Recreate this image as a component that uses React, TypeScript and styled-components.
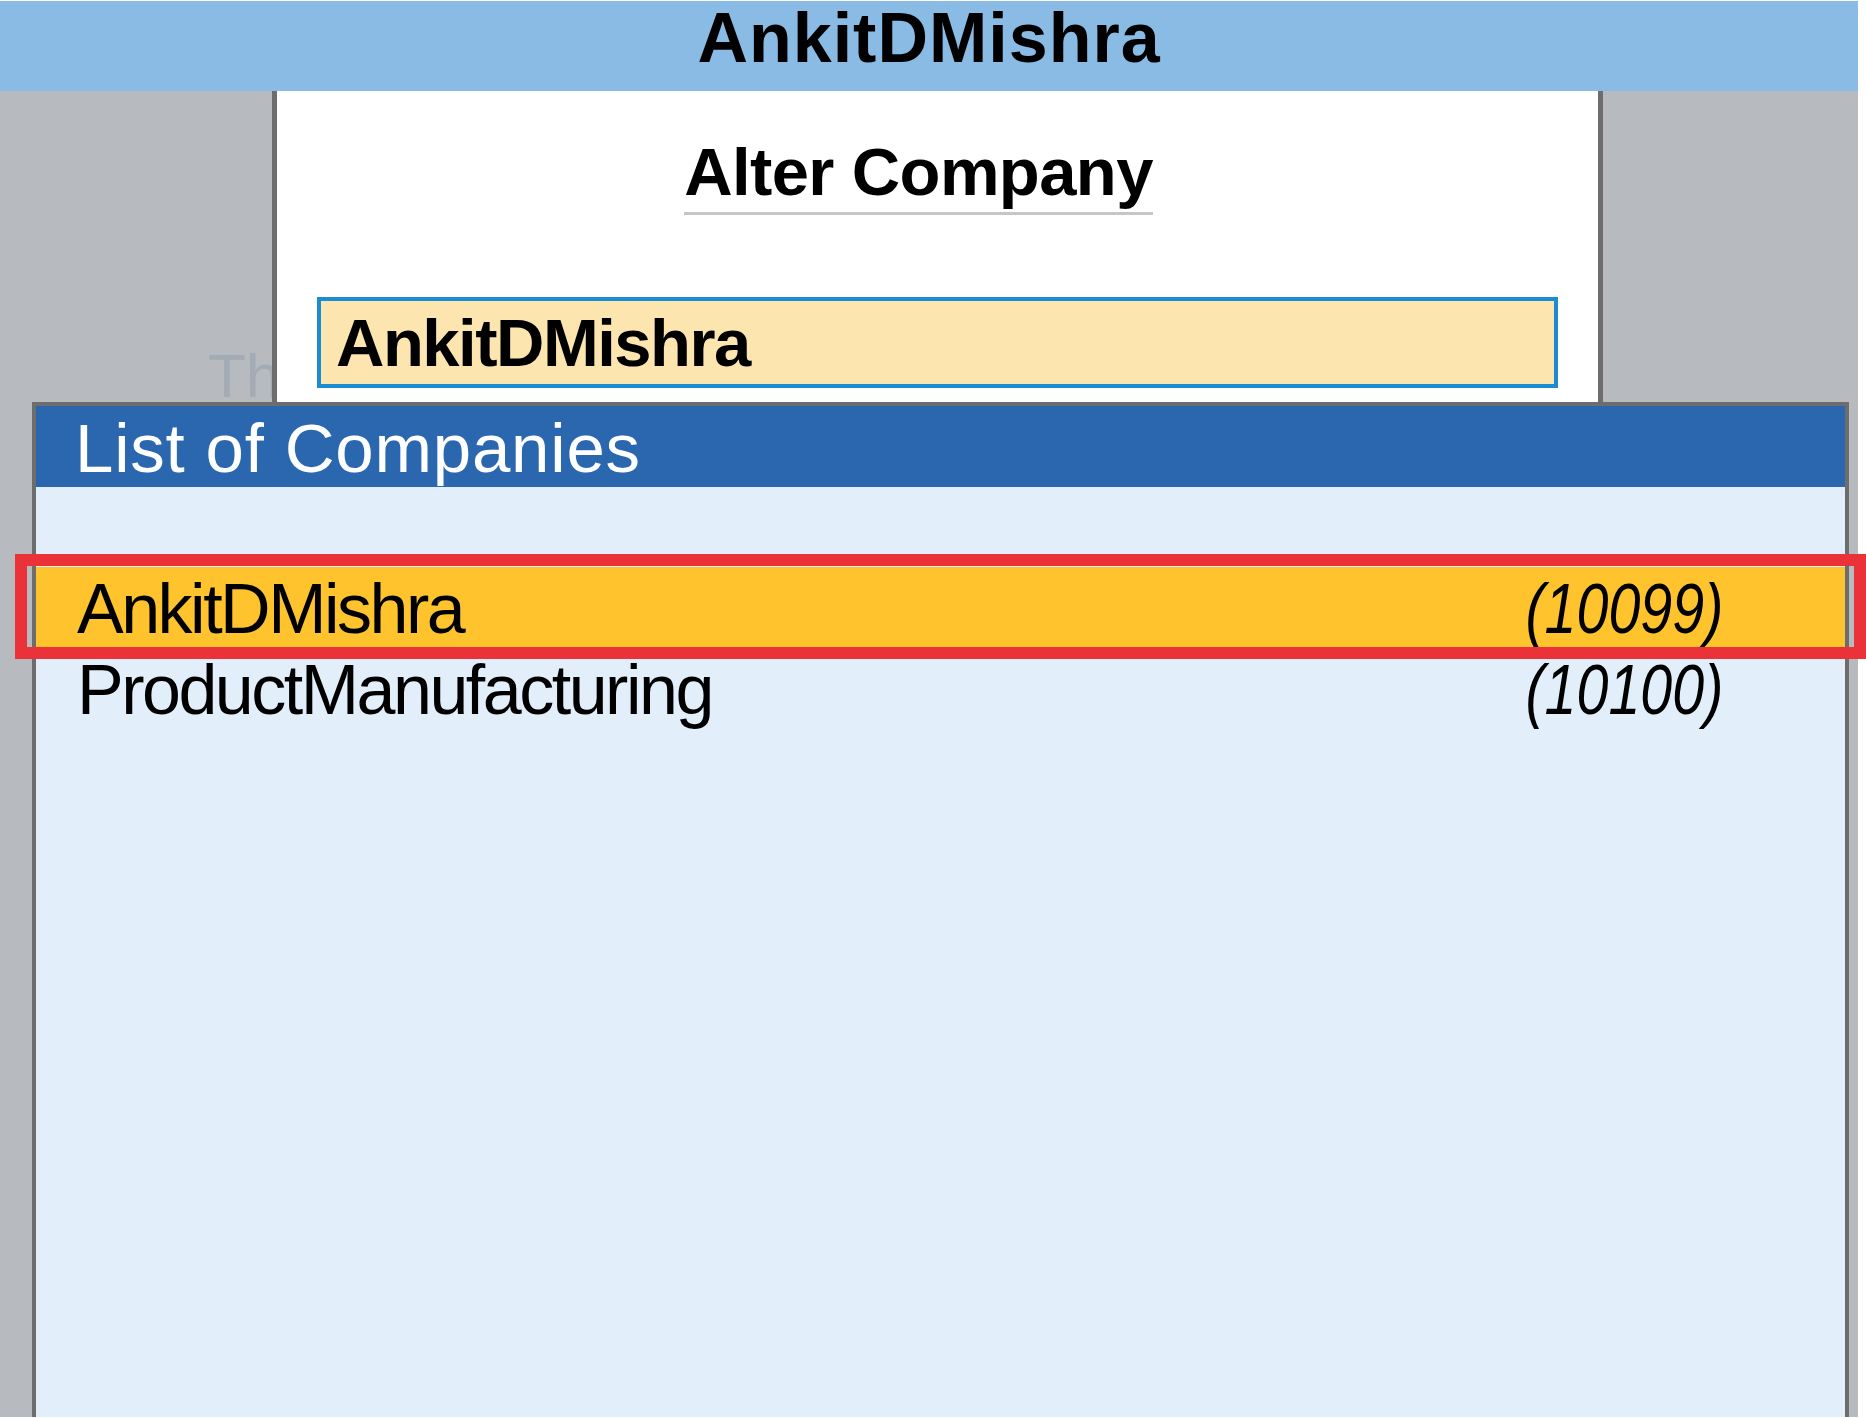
import React from "react";
import styled, { createGlobalStyle } from "styled-components";

const GlobalStyle = createGlobalStyle`
  html, body { margin: 0; padding: 0; background: #ffffff; }
  * { box-sizing: border-box; }
`;

const Root = styled.div`
  position: relative;
  width: 1866px;
  height: 1418px;
  padding: 1px 8px 1px 0;
  background: #ffffff;
  overflow: hidden;
  font-family: "Liberation Sans", Arial, sans-serif;
`;

const Screen = styled.div`
  position: relative;
  height: 100%;
  display: flex;
  flex-direction: column;
  background: #b7bbbf;
`;

const TopBar = styled.header`
  flex: none;
  height: 90px;
  padding-top: 2px;
  display: flex;
  justify-content: center;
  align-items: flex-start;
  background: #89bbe4;
  color: #000;
  font-weight: bold;
  font-size: 70px;
  line-height: 1;
  letter-spacing: 1px;
`;

const Workspace = styled.div`
  flex: 1;
  display: grid;
  grid-template-columns: 272px 1331px 1fr;
  min-height: 0;
`;

const Gutter = styled.div`
  overflow: hidden;
  padding-top: 254px;
`;

const GhostText = styled.div`
  padding-left: 208px;
  white-space: nowrap;
  font-size: 62px;
  line-height: 1;
  color: #a3abb5;
`;

const Panel = styled.section`
  display: flex;
  flex-direction: column;
  background: #ffffff;
  border-left: 5px solid #6d6d6d;
  border-right: 5px solid #6d6d6d;
  padding-top: 47px;
`;

const HeadingRow = styled.div`
  display: flex;
  justify-content: center;
  padding-right: 38px;
`;

const Heading = styled.h1`
  margin: 0;
  padding-bottom: 7px;
  border-bottom: 3px solid #c6c6c6;
  font-size: 67px;
  line-height: 1;
  font-weight: bold;
  letter-spacing: -0.6px;
  color: #000;
`;

const NameField = styled.div`
  margin: 82px 40px 0;
  height: 91px;
  padding: 8px 15px 0;
  border: 4px solid #1c8cd0;
  background: #fde5af;
  font-size: 67px;
  line-height: 1;
  font-weight: bold;
  letter-spacing: -1.5px;
  color: #000;
`;

const Popup = styled.div`
  position: absolute;
  left: 32px;
  top: 401px;
  right: 9px;
  bottom: 0;
  display: flex;
  flex-direction: column;
  border: 4px solid #6d6d6d;
  border-bottom: none;
  background: #e2effa;
`;

const PopupHeader = styled.div`
  flex: none;
  height: 81px;
  padding: 8px 0 0 39px;
  background: #2a67af;
  color: #ffffff;
  font-size: 69px;
  line-height: 1;
  letter-spacing: 0.8px;
`;

const List = styled.div`
  padding-top: 80px;
  display: flex;
  flex-direction: column;
`;

const Row = styled.div<{ $selected?: boolean }>`
  height: 81px;
  padding: 7px 122px 0 41px;
  display: flex;
  justify-content: space-between;
  align-items: flex-start;
  background: ${(p) => (p.$selected ? "#ffc32e" : "transparent")};
  color: #000;
  font-size: 70px;
  line-height: 1;
`;

const Name = styled.span`
  letter-spacing: -2.5px;
`;

const Code = styled.span`
  display: inline-block;
  font-style: italic;
  transform: scaleX(0.82);
  transform-origin: right center;
`;

const Highlight = styled.div`
  position: absolute;
  left: 15px;
  top: 554px;
  width: 1851px;
  height: 105px;
  border: 12px solid #eb3239;
  pointer-events: none;
`;

const companies = [
  { name: "AnkitDMishra", code: "(10099)", selected: true },
  { name: "ProductManufacturing", code: "(10100)", selected: false },
];

export default function App() {
  return (
    <>
      <GlobalStyle />
      <Root>
        <Screen>
          <TopBar>AnkitDMishra</TopBar>
          <Workspace>
            <Gutter>
              <GhostText>Th</GhostText>
            </Gutter>
            <Panel>
              <HeadingRow>
                <Heading>Alter Company</Heading>
              </HeadingRow>
              <NameField>AnkitDMishra</NameField>
            </Panel>
            <Gutter />
          </Workspace>
          <Popup>
            <PopupHeader>List of Companies</PopupHeader>
            <List>
              {companies.map((c) => (
                <Row key={c.name} $selected={c.selected}>
                  <Name>{c.name}</Name>
                  <Code>{c.code}</Code>
                </Row>
              ))}
            </List>
          </Popup>
        </Screen>
        <Highlight />
      </Root>
    </>
  );
}
